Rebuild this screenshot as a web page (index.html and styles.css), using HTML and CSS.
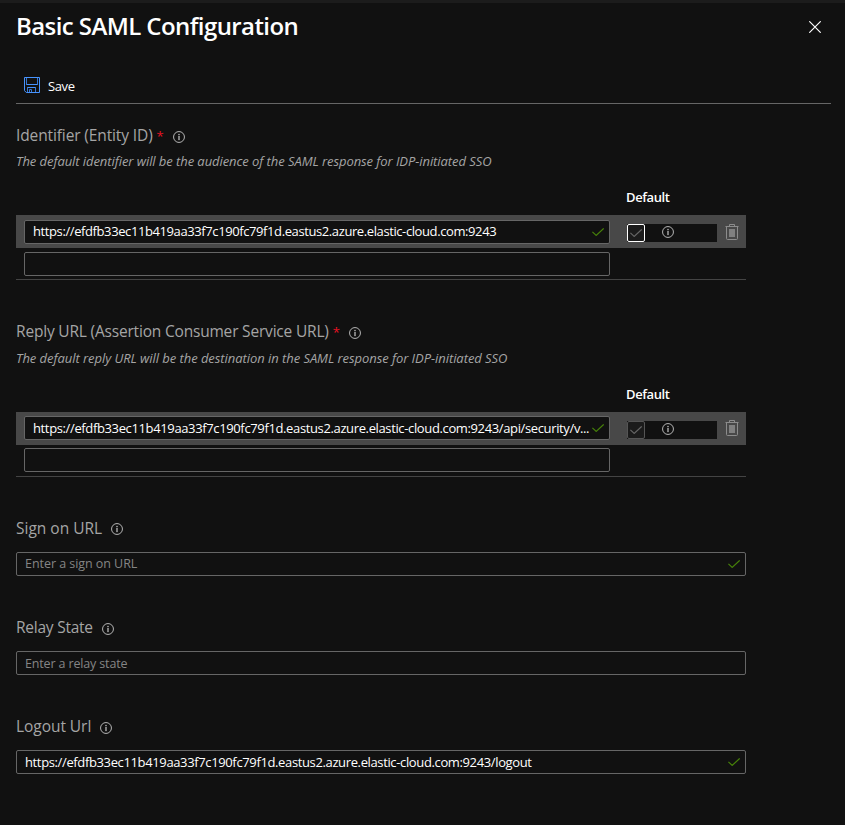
FILE: index.html
```html
<!DOCTYPE html>
<html lang="en">
<head>
<meta charset="utf-8">
<title>Basic SAML Configuration</title>
<link rel="stylesheet" href="styles.css">
</head>
<body>
<svg class="defs" width="0" height="0">
  <symbol id="info" viewBox="0 0 12 12"><circle cx="6" cy="6" r="5.45" fill="none" stroke="currentColor" stroke-width="1"/><path d="M5.5 5h1v4h-1zM5.5 3h1v1h-1z" fill="currentColor" stroke="currentColor" stroke-width=".35"/></symbol>
  <symbol id="check" viewBox="0 0 12 8"><path d="M.4 3.9 4.2 7.4 11.7.4" fill="none" stroke="currentColor" stroke-width="1.2"/></symbol>
  <symbol id="trash" viewBox="0 0 14 16"><path d="M4.5 2V.5h5V2M.5 2.5h13M1.5 3v11.5q0 1 1 1h9q1 0 1-1V3" fill="none" stroke="#8c8c8c"/><path d="M4 5h6v8H4z" fill="#808080"/></symbol>
</svg>
<main class="panel">
  <header class="head">
    <h1 class="title">Basic SAML Configuration</h1>
    <svg class="close" width="12" height="12" viewBox="0 0 12 12"><path d="M.3.3 11.7 11.7M11.7.3.3 11.7" stroke="#fff" stroke-width="1.15"/></svg>
  </header>
  <div class="toolbar">
    <svg width="16" height="16" viewBox="0 0 16 16" fill="none" stroke="#4894fe"><path d="M2.5.5v7h11v-7M3.5 15.5v-5h8v5M5.5 15.5v-3h2v3" stroke="#3476d2"/><path d="M.5.5h15v15H2.3L.5 13.7z"/><path d="M2.5 7.5h11M3.5 10.5h8"/></svg>
    <span class="save">Save</span>
  </div>

  <section class="group first">
    <div class="label"><span class="t-id">Identifier (Entity ID)</span><b class="req">*</b><svg class="info"><use href="#info"/></svg></div>
    <p class="hint h-id">The default identifier will be the audience of the SAML response for IDP-initiated SSO</p>
    <div class="colhead">Default</div>
    <div class="row">
      <div class="box"><span class="url u-id">https://efdfb33ec11b419aa33f7c190fc79f1d.eastus2.azure.elastic-cloud.com:9243</span><svg class="check"><use href="#check"/></svg></div>
      <div class="default"><span class="cb focus"><svg class="check"><use href="#check"/></svg></span><svg class="info"><use href="#info"/></svg></div>
      <svg class="trash"><use href="#trash"/></svg>
    </div>
    <div class="empty"><div class="box"></div></div>
  </section>

  <section class="group second">
    <div class="label"><span class="t-reply">Reply URL (Assertion Consumer Service URL)</span><b class="req">*</b><svg class="info"><use href="#info"/></svg></div>
    <p class="hint h-reply">The default reply URL will be the destination in the SAML response for IDP-initiated SSO</p>
    <div class="colhead">Default</div>
    <div class="row">
      <div class="box"><span class="url u-reply">https://efdfb33ec11b419aa33f7c190fc79f1d.eastus2.azure.elastic-cloud.com:9243/api/security/v...</span><svg class="check"><use href="#check"/></svg></div>
      <div class="default"><span class="cb"><svg class="check"><use href="#check"/></svg></span><svg class="info"><use href="#info"/></svg></div>
      <svg class="trash"><use href="#trash"/></svg>
    </div>
    <div class="empty"><div class="box"></div></div>
  </section>

  <section class="field sign">
    <div class="label"><span class="t-sign">Sign on URL</span><svg class="info"><use href="#info"/></svg></div>
    <div class="box"><span class="ph p-sign">Enter a sign on URL</span><svg class="check"><use href="#check"/></svg></div>
  </section>
  <section class="field">
    <div class="label"><span class="t-relay">Relay State</span><svg class="info"><use href="#info"/></svg></div>
    <div class="box"><span class="ph p-relay">Enter a relay state</span></div>
  </section>
  <section class="field">
    <div class="label"><span class="t-logout">Logout Url</span><svg class="info"><use href="#info"/></svg></div>
    <div class="box"><span class="url u-logout">https://efdfb33ec11b419aa33f7c190fc79f1d.eastus2.azure.elastic-cloud.com:9243/logout</span><svg class="check"><use href="#check"/></svg></div>
  </section>
</main>
</body>
</html>
```
FILE: styles.css
```css
* { box-sizing: border-box; }
body { margin: 0; background: #111; color: #fff; font: 13px/18px "Open Sans", "Noto Sans", sans-serif; }
.defs { position: absolute; }
svg { display: block; flex: none; }
.panel { height: 825px; overflow: hidden; border-top: 3px solid #1c1c1c; padding: 0 14px 0 16px; white-space: nowrap; }
.head { display: flex; justify-content: space-between; height: 48px; padding-right: 10px; }
.title { margin: 6px 0 0; font-size: 24px; line-height: 34px; font-weight: 600; letter-spacing: -0.58px; }
.close { margin-top: 18px; }
.toolbar { display: flex; align-items: center; height: 53px; padding: 17px 0 2px 8px; border-bottom: 1px solid #666; gap: 8px; }
.save { letter-spacing: -0.4px; padding-top: 2px; }

.group, .field { width: 730px; }
.label { display: flex; align-items: center; height: 22px; font-size: 15.5px; color: #a5a5a5; }
.label span { flex: none; padding-bottom: 2px; }
.info { width: 12px; height: 12px; color: #b4b4b4; }
.label .info { margin: 2px 0 0 9px; }
.req { width: 7px; margin-left: 4px; font-size: 13px; font-weight: 400; color: #e81123; }
.hint { margin: 0; font-size: 13px; line-height: 18px; font-style: italic; color: #a5a5a5; letter-spacing: -0.07px; }
.colhead { padding-left: 610px; font-weight: 600; letter-spacing: -0.4px; line-height: 18px; }
.row { display: flex; height: 33px; padding-left: 8px; background: #484848; }
.box { display: flex; align-items: center; justify-content: space-between; height: 24px; padding: 0 5px 0 8px; background: #111; border: 1px solid #666; border-radius: 2px; }
.row .box, .empty .box { width: 586px; }
.check { width: 12px; height: 8px; color: #478209; }
.default { display: flex; align-items: center; width: 90px; height: 18px; margin: 4px 0 0 17px; background: #111; }
.cb { display: flex; align-items: center; justify-content: center; width: 18px; height: 18px; border: 1px solid #555; border-radius: 2px; background: #1b1b1b; }
.cb .check { color: #666; }
.cb.focus { border-color: #fff; }
.default .info { margin: -2px 0 0 17px; }
.trash { width: 14px; height: 16px; margin: 4px 0 0 8px; }

.first { padding-top: 21px; }
.first .hint { margin-top: 5px; }
.first .colhead { margin: 18px 0 9px; }
.first .row { padding-top: 5px; }
.first .empty { padding: 4px 0 3px 8px; border-bottom: 1px solid #444; }
.second { padding-top: 41px; }
.second .hint { margin-top: 6px; letter-spacing: -0.055px; }
.second .colhead { margin: 18px 0 9px; }
.second .row { padding-top: 4px; }
.second .default { margin-top: 5px; }
.second .empty { padding: 3px 0 4px 8px; border-bottom: 1px solid #444; }
.field { height: 99px; }
.field .box { margin-top: 12px; }
.sign { height: 100px; margin-top: 40px; }
.sign .box { margin-top: 13px; }
.ph { color: #858585; font-size: 12.5px; letter-spacing: -0.05px; padding-bottom: 1px; }
.p-relay { letter-spacing: -0.15px; padding: 1px 0 0; }

.t-id { letter-spacing: -0.12px; }
.t-reply { letter-spacing: -0.19px; }
.label .t-sign { padding-bottom: 0; }
.t-relay { letter-spacing: -0.24px; }
.t-logout { letter-spacing: -0.05px; }
.url { letter-spacing: -0.4px; padding-bottom: 2px; }
.u-reply, .u-logout { letter-spacing: -0.366px; padding-bottom: 0; }
```
